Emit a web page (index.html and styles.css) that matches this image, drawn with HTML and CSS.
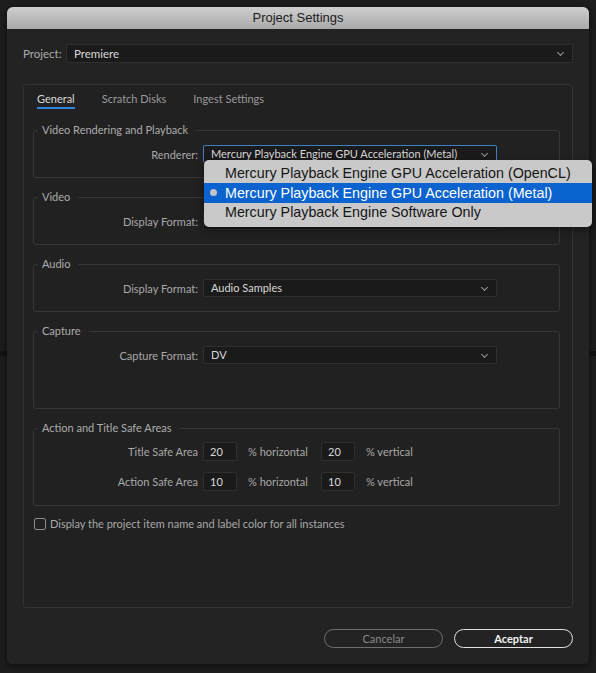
FILE: index.html
```html
<!DOCTYPE html>
<html lang="en">
<head>
    <meta charset="UTF-8">
    <meta name="viewport" content="width=device-width, initial-scale=1.0">
    <link rel="stylesheet" href="styles.css">
    <title>Project Settings</title>
</head>
<body>
    <div class="dialog">
        <div class="titlebar">Project Settings</div>

        <div class="project-row">
            <span class="label">Project:</span>
            <div class="select project-select">Premiere</div>
        </div>

        <div class="panel">
            <div class="tabs">
                <span class="tab active">General</span>
                <span class="tab">Scratch Disks</span>
                <span class="tab">Ingest Settings</span>
            </div>

            <fieldset class="group">
                <legend>Video Rendering and Playback</legend>
                <div class="row">
                    <span class="row-label">Renderer:</span>
                    <div class="select focused">Mercury Playback Engine GPU Acceleration (Metal)</div>
                </div>
            </fieldset>

            <fieldset class="group">
                <legend>Video</legend>
                <div class="row">
                    <span class="row-label">Display Format:</span>
                    <div class="select">Timecode</div>
                </div>
            </fieldset>

            <fieldset class="group">
                <legend>Audio</legend>
                <div class="row">
                    <span class="row-label">Display Format:</span>
                    <div class="select">Audio Samples</div>
                </div>
            </fieldset>

            <fieldset class="group tall">
                <legend>Capture</legend>
                <div class="row">
                    <span class="row-label">Capture Format:</span>
                    <div class="select">DV</div>
                </div>
            </fieldset>

            <fieldset class="group safe">
                <legend>Action and Title Safe Areas</legend>
                <div class="row">
                    <span class="row-label">Title Safe Area</span>
                    <div class="num">20</div>
                    <span class="unit">% horizontal</span>
                    <div class="num">20</div>
                    <span class="unit">% vertical</span>
                </div>
                <div class="row">
                    <span class="row-label">Action Safe Area</span>
                    <div class="num">10</div>
                    <span class="unit">% horizontal</span>
                    <div class="num">10</div>
                    <span class="unit">% vertical</span>
                </div>
            </fieldset>

            <label class="check-row">
                <span class="checkbox"></span>
                Display the project item name and label color for all instances
            </label>
        </div>

        <div class="buttons">
            <button class="btn">Cancelar</button>
            <button class="btn primary">Aceptar</button>
        </div>

        <!-- open renderer popup -->
        <div class="menu">
            <div class="menu-item">Mercury Playback Engine GPU Acceleration (OpenCL)</div>
            <div class="menu-item selected">Mercury Playback Engine GPU Acceleration (Metal)</div>
            <div class="menu-item">Mercury Playback Engine Software Only</div>
        </div>
    </div>
</body>
</html>
```

FILE: styles.css
```css
body {
    margin: 0;
    height: 673px;
    overflow: hidden;
    font-family: Lato, "Open Sans", sans-serif;
    font-size: 11px;
    color: #a8a8a8;
    background: linear-gradient(to bottom, #1e1e1e 0, #1e1e1e 351px, #131313 351px, #131313 356px, #1e1e1e 356px);
}

.dialog {
    position: relative;
    margin: 7px 7px 0 7px;
    width: 582px;
    height: 657px;
    background-color: #232323;
    border-radius: 6px 6px 5px 5px;
    box-shadow: 0 2px 8px rgba(0, 0, 0, 0.6);
    display: flex;
    flex-direction: column;
}

.titlebar {
    height: 22px;
    line-height: 22px;
    text-align: center;
    font-family: "Liberation Sans", Arial, sans-serif;
    font-size: 13px;
    color: #1c1c1c;
    background: linear-gradient(to bottom, #cfcfcf, #a9a9a9);
    border-radius: 6px 6px 0 0;
}

.project-row {
    display: flex;
    align-items: center;
    padding: 15px 16px 0 16px;
}

.project-row .label {
    width: 43px;
    color: #acacac;
    font-size: 11.5px;
}

.select {
    position: relative;
    box-sizing: border-box;
    height: 18px;
    line-height: 16px;
    padding-left: 7px;
    background-color: #1a1a1a;
    border: 1px solid #2f2f2f;
    border-radius: 2px;
    color: #d8d8d8;
    font-size: 11px;
    width: 294px;
}

.select::after {
    content: "";
    position: absolute;
    right: 9px;
    top: 5px;
    width: 4px;
    height: 4px;
    border-right: 1px solid #9a9a9a;
    border-bottom: 1px solid #9a9a9a;
    transform: rotate(45deg);
}

.project-select {
    width: 507px;
    height: 19px;
    line-height: 17px;
    font-size: 11.5px;
}

.select.focused {
    border-color: #3f7fc4;
}

.panel {
    box-sizing: border-box;
    height: 524px;
    margin: 21px 16px 0 16px;
    border: 1px solid #333333;
    border-radius: 3px;
    background-color: #212121;
    padding: 0 12px 0 9px;
}

.tabs {
    display: flex;
    gap: 27px;
    padding: 7px 0 0 4px;
}

.tab {
    line-height: 14px;
    padding-bottom: 1px;
    border-bottom: 2px solid transparent;
    color: #9a9a9a;
}

.tab.active {
    color: #d8d8d8;
    border-bottom-color: #2f86dd;
}

.group {
    margin: 14px 0 0 0;
    padding: 8px 0 14px 0;
    border: 1px solid #363636;
    border-radius: 3px;
    min-width: 0;
}

.group + .group {
    margin-top: 12px;
}

.group legend {
    margin-left: 4px;
    padding: 0 8px 0 4px;
    line-height: 14px;
    color: #acacac;
}

.group.tall {
    padding-bottom: 44px;
}

.group.safe {
    padding-top: 7px;
}

.row {
    display: flex;
    align-items: center;
    gap: 5px;
}

.safe .row + .row {
    margin-top: 11px;
}

.row-label {
    width: 164px;
    text-align: right;
    color: #a8a8a8;
}

.num {
    box-sizing: border-box;
    width: 34px;
    height: 19px;
    line-height: 17px;
    padding-left: 6px;
    background-color: #1a1a1a;
    border: 1px solid #2f2f2f;
    border-radius: 2px;
    color: #d8d8d8;
}

.unit {
    margin: 0 6px;
    width: 62px;
    color: #a8a8a8;
}

.check-row {
    display: flex;
    align-items: center;
    gap: 4px;
    margin: 11px 0 0 1px;
    color: #a8a8a8;
}

.checkbox {
    box-sizing: border-box;
    width: 12px;
    height: 12px;
    border: 1.5px solid #8c8c8c;
    border-radius: 2px;
}

.buttons {
    display: flex;
    justify-content: flex-end;
    gap: 11px;
    padding: 21px 16px 0 0;
}

.btn {
    box-sizing: border-box;
    width: 119px;
    height: 19px;
    border-radius: 10px;
    background: transparent;
    border: 1.5px solid #6f6f6f;
    color: #8a8a8a;
    font-family: Lato, "Open Sans", sans-serif;
    font-size: 11px;
    padding: 0;
}

.btn.primary {
    border-color: #e2e2e2;
    color: #f2f2f2;
    font-weight: bold;
}

.menu {
    position: absolute;
    left: 197px;
    top: 153px;
    width: 388px;
    padding: 4px 0 5px 0;
    background-color: #c9c9c9;
    border-radius: 5px;
    box-shadow: 0 3px 10px rgba(0, 0, 0, 0.45);
    font-family: "Liberation Sans", Arial, sans-serif;
    font-size: 14.3px;
    color: #151515;
}

.menu-item {
    position: relative;
    height: 19px;
    line-height: 19px;
    padding-left: 21px;
}

.menu-item.selected {
    height: 20px;
    line-height: 20px;
    background-color: #0b63d0;
    color: #ffffff;
}

.menu-item.selected::before {
    content: "";
    position: absolute;
    left: 6px;
    top: 6px;
    width: 7px;
    height: 7px;
    border-radius: 50%;
    background-color: #c4c4c4;
}
```
